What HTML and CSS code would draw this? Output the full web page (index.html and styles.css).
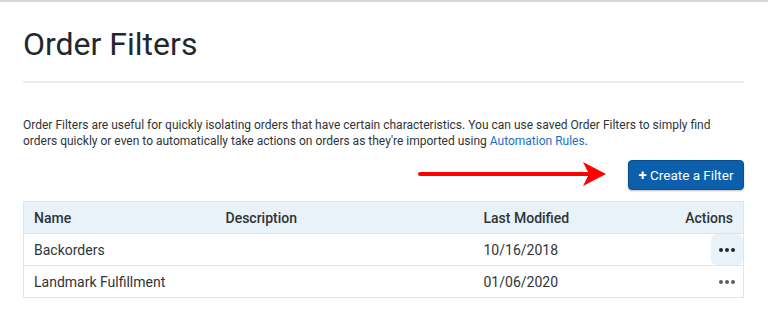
FILE: index.html
```html
<!DOCTYPE html>
<html lang="en">
<head>
    <meta charset="UTF-8">
    <title>Order Filters</title>
    <link rel="stylesheet" href="styles.css">
</head>
<body>
    <div class="page">
        <h1 class="page-title">Order Filters</h1>
        <hr class="divider">

        <p class="intro">
            Order Filters are useful for quickly isolating orders that have certain characteristics. You can use saved Order Filters to simply find<br>
            orders quickly or even to automatically take actions on orders as they're imported using <a href="#" class="link">Automation Rules</a>.
        </p>

        <div class="toolbar">
            <svg class="arrow" width="190" height="26" viewBox="0 0 190 26">
                <line x1="2" y1="13" x2="172" y2="13" stroke="#ff0000" stroke-width="4" stroke-linecap="round"/>
                <polygon points="165,1 188,13 165,25 171,13" fill="#ff0000"/>
            </svg>
            <button class="create-btn"><span class="plus">+</span> Create a Filter</button>
        </div>

        <table class="filters">
            <thead>
                <tr>
                    <th class="col-name">Name</th>
                    <th class="col-desc">Description</th>
                    <th class="col-date">Last Modified</th>
                    <th class="col-actions">Actions</th>
                </tr>
            </thead>
            <tbody>
                <tr>
                    <td>Backorders</td>
                    <td></td>
                    <td>10/16/2018</td>
                    <td class="cell-actions">
                        <span class="more-btn active">
                            <svg width="16" height="4" viewBox="0 0 16 4"><circle cx="2" cy="2" r="2"/><circle cx="8" cy="2" r="2"/><circle cx="14" cy="2" r="2"/></svg>
                        </span>
                    </td>
                </tr>
                <tr>
                    <td>Landmark Fulfillment</td>
                    <td></td>
                    <td>01/06/2020</td>
                    <td class="cell-actions">
                        <span class="more-btn">
                            <svg width="16" height="4" viewBox="0 0 16 4"><circle cx="2" cy="2" r="2"/><circle cx="8" cy="2" r="2"/><circle cx="14" cy="2" r="2"/></svg>
                        </span>
                    </td>
                </tr>
            </tbody>
        </table>
    </div>
</body>
</html>
```

FILE: styles.css
```css
* {
    margin: 0;
    padding: 0;
    box-sizing: border-box;
    font-family: Roboto, 'Liberation Sans', sans-serif;
}

body {
    background: #ffffff;
    border-top: 2px solid #d3d7dc;
    color: #333a42;
}

.page {
    padding: 0 24px 0 23px;
}

.page-title {
    font-size: 32px;
    font-weight: 400;
    line-height: 38px;
    color: #1f2830;
    margin-top: 23px;
}

.divider {
    border: none;
    height: 2px;
    background: #e8ecf0;
    margin-top: 18px;
}

.intro {
    font-size: 12px;
    line-height: 16px;
    color: #2f3439;
    margin-top: 34px;
    white-space: nowrap;
}

.link {
    color: #1a6fc4;
    text-decoration: none;
}

.toolbar {
    display: flex;
    justify-content: flex-end;
    align-items: center;
    gap: 20px;
    margin-top: 11px;
}

.arrow {
    display: block;
    margin-top: -3px;
}

.create-btn {
    height: 30px;
    width: 116px;
    padding: 0;
    border: 1px solid #094f92;
    border-radius: 4px;
    background: #0b5fab;
    color: #ffffff;
    font-size: 13.5px;
    box-shadow: 0 1px 2px rgba(0, 0, 0, 0.25);
}

.plus {
    font-weight: 700;
    font-size: 15px;
}

.filters {
    width: 100%;
    margin-top: 11px;
    border-collapse: collapse;
    border: 1px solid #e1e5ea;
    font-size: 14px;
    color: #2f3439;
}

.filters th {
    background: #e9f2f8;
    font-weight: 500;
    text-align: left;
    height: 32px;
    padding: 0 10px;
    border-bottom: 1px solid #dde3e9;
}

.filters td {
    height: 32px;
    padding: 0 10px;
    border-bottom: 1px solid #e1e5ea;
}

.col-name { width: 192px; }
.col-desc { width: 258px; }
.col-date { width: 150px; }

.filters th.col-actions {
    text-align: right;
}

.filters td.cell-actions {
    padding: 0;
    text-align: right;
}

.more-btn {
    display: inline-flex;
    align-items: center;
    justify-content: center;
    width: 32px;
    height: 31px;
    border-radius: 6px;
    vertical-align: middle;
    fill: #5a5f66;
}

.more-btn.active {
    background: #e9f2f8;
    fill: #1f2830;
}
```
